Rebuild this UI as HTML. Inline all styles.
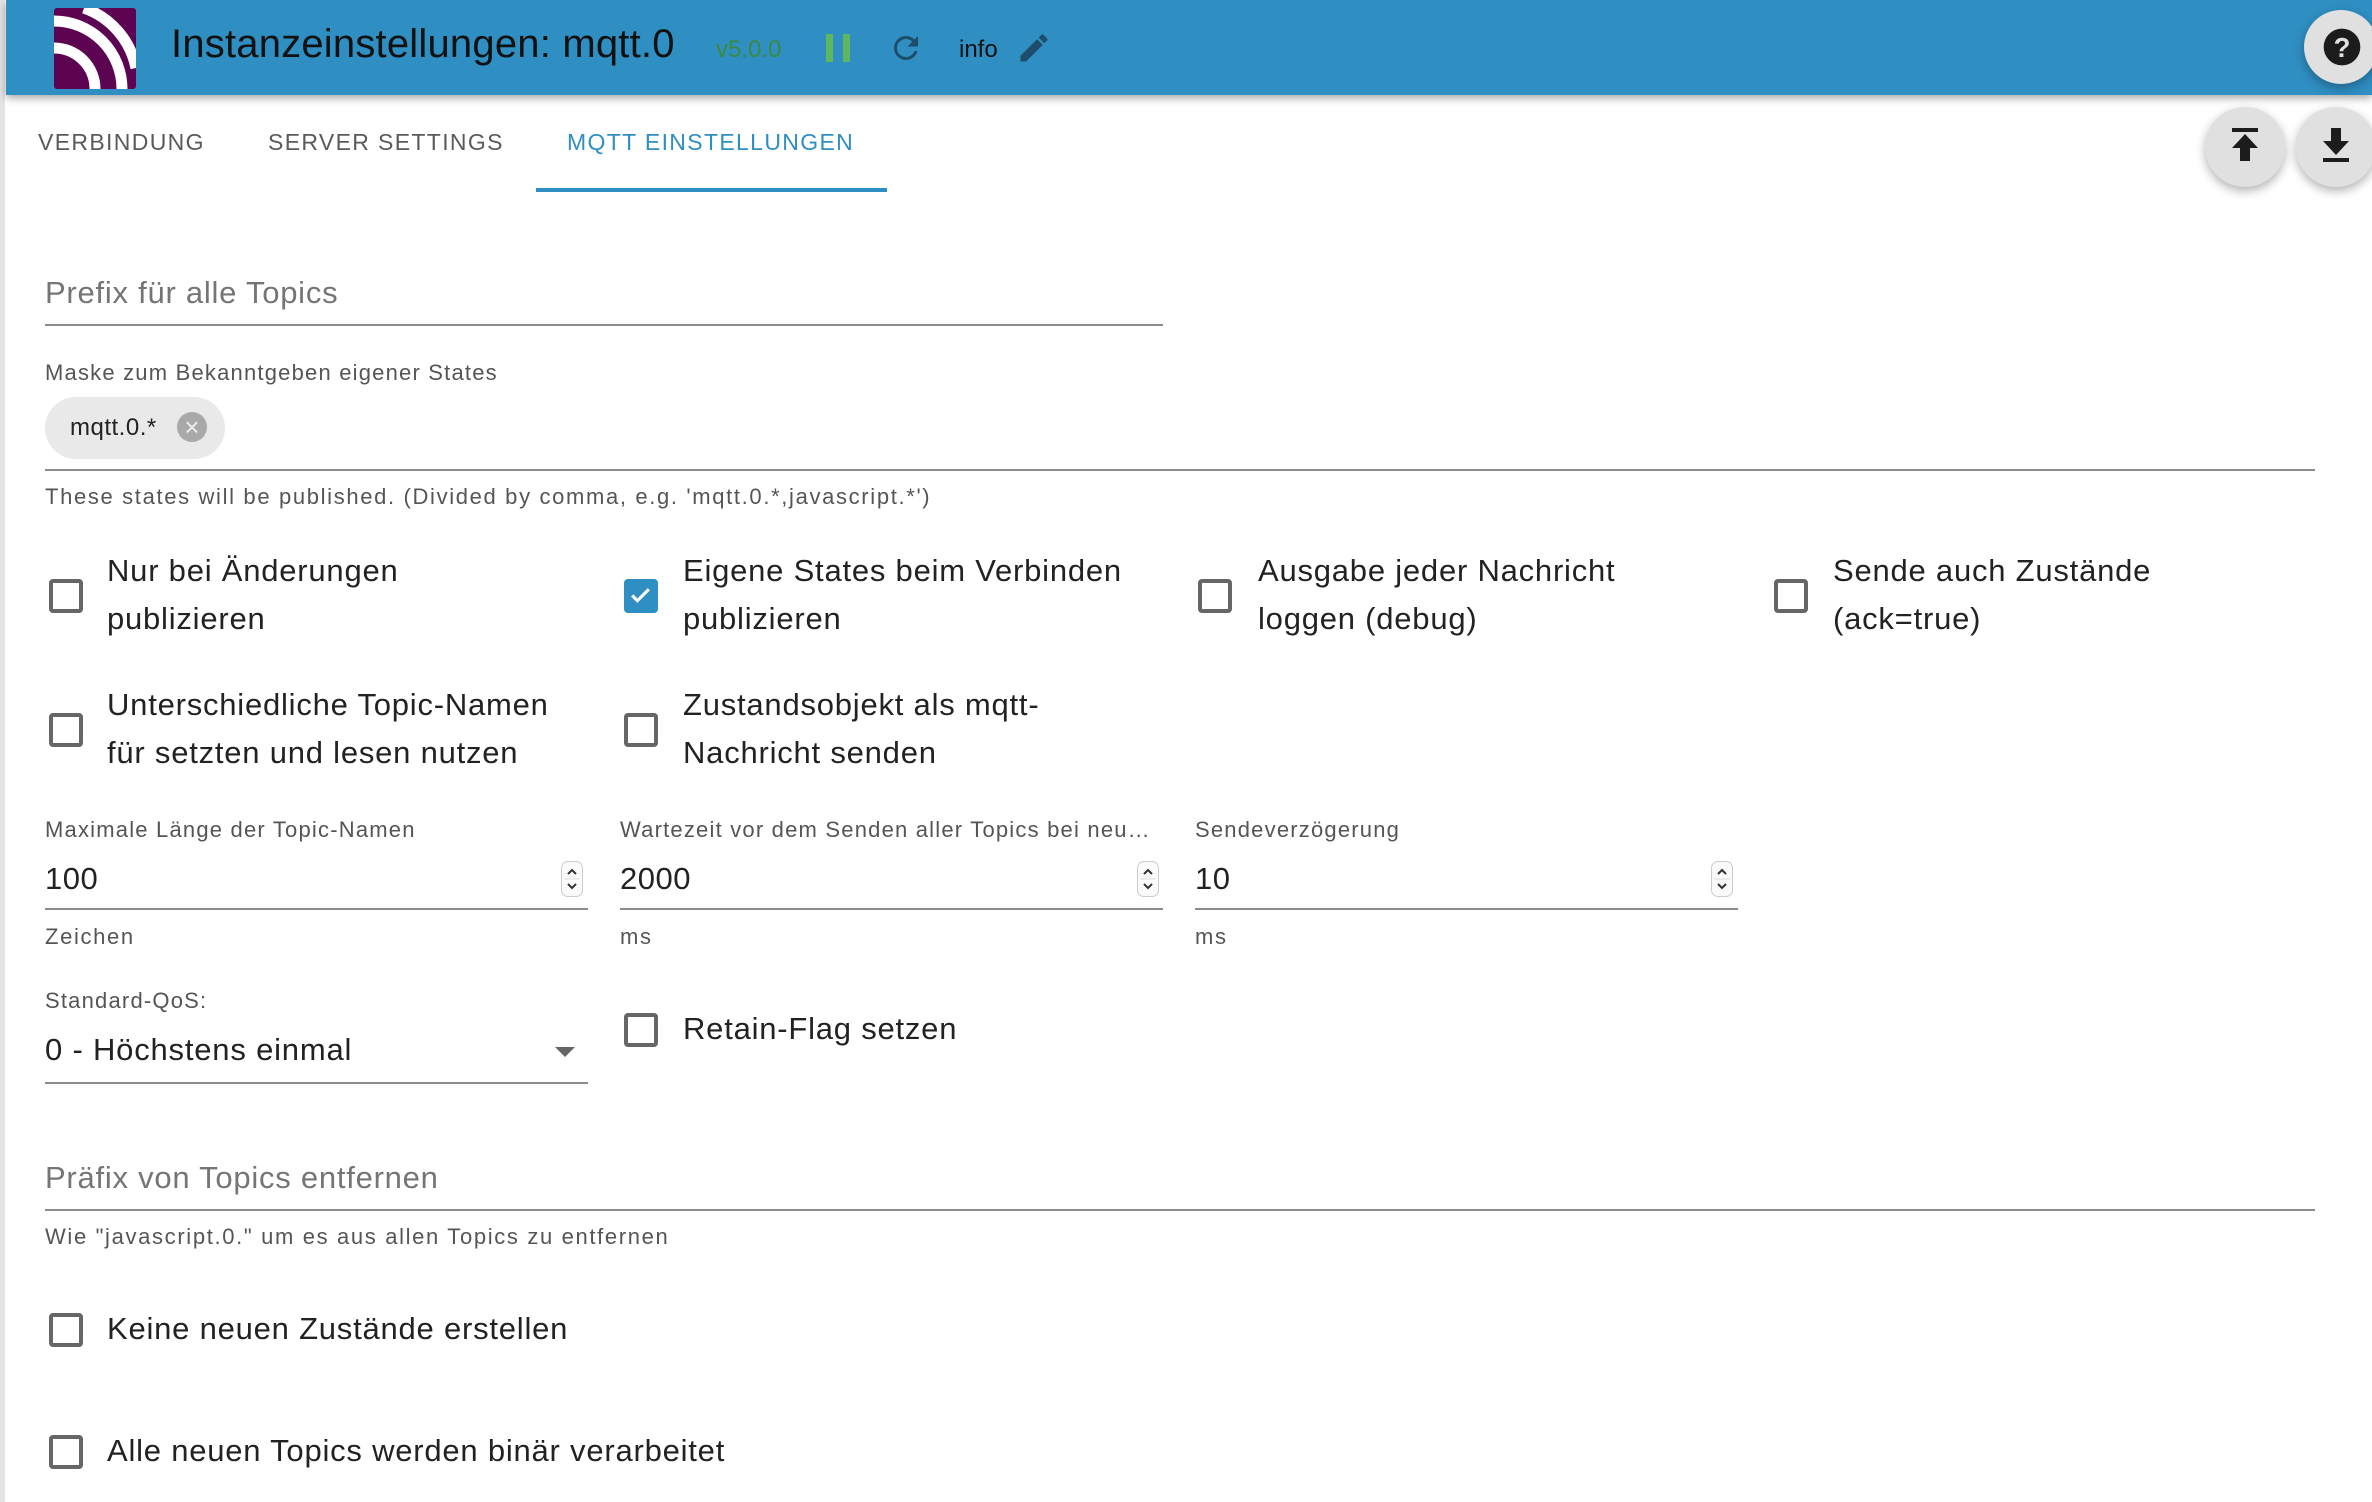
<!DOCTYPE html>
<html><head><meta charset="utf-8"><style>
*{margin:0;padding:0;box-sizing:border-box}
body{width:2372px;height:1502px;background:#fff;position:relative;overflow:hidden;font-family:"Liberation Sans",Arial,sans-serif;color:#1d1d1d}
.a{position:absolute;white-space:nowrap}
.lbl{font-size:22px;color:#555;letter-spacing:1.2px}
.hlp{font-size:22px;color:#555;letter-spacing:1.65px}
.big{font-size:31px;color:#222;letter-spacing:0.5px}
.line{position:absolute;height:2px;background:#8c8c8c}
.cb{position:absolute;width:34px;height:34px;border:4px solid #666;border-radius:4px}
.cbt{position:absolute;font-size:31px;line-height:48px;color:#222;white-space:nowrap;letter-spacing:0.78px}
.tab{font-size:23px;letter-spacing:1.35px}
.spin{position:absolute;width:22px;height:36px;border:1px solid #ccc;border-radius:7px;background:#fafafa}
.fab{position:absolute;width:80px;height:80px;border-radius:50%;background:#e0e0e0;box-shadow:0 4px 10px rgba(0,0,0,.3)}
</style></head><body>
<div class="a" style="left:0;top:0;width:5px;height:1502px;background:#e4e4e4"></div>
<div class="a" style="left:6px;top:0;width:2366px;height:95px;background:#2f8ec2;box-shadow:0 3px 8px rgba(0,0,0,.35)"></div>
<svg class="a" style="left:54px;top:8px" width="82" height="81" viewBox="0 0 82 81">
<rect width="82" height="81" rx="3" fill="#5c0452"/>
<g fill="none" stroke="#fff" stroke-width="11">
<path d="M0 40 A41 41 0 0 1 41 81"/>
<path d="M0 13 A68 68 0 0 1 68 81"/>
<path d="M30 0 A80 80 0 0 1 82 60"/>
</g></svg>
<div class="a" style="left:171px;top:22px;font-size:40px;color:#111;letter-spacing:0.2px">Instanzeinstellungen: mqtt.0</div>
<div class="a" style="left:716px;top:36px;font-size:24px;color:#3b8a3f">v5.0.0</div>
<div class="a" style="left:826px;top:34px;width:7px;height:28px;background:#5fb65f"></div>
<div class="a" style="left:843px;top:34px;width:7px;height:28px;background:#5fb65f"></div>
<svg class="a" style="left:888px;top:30px" width="36" height="36" viewBox="0 0 24 24"><path fill="#1d4d6a" d="M17.65 6.35A7.96 7.96 0 0 0 12 4a8 8 0 1 0 7.73 10h-2.08A6 6 0 1 1 12 6c1.66 0 3.14.69 4.22 1.78L13 11h7V4l-2.35 2.35z"/></svg>
<div class="a" style="left:959px;top:36px;font-size:24px;color:#111">info</div>
<svg class="a" style="left:1016px;top:30px" width="36" height="36" viewBox="0 0 24 24"><path fill="#1d4d6a" d="M3 17.25V21h3.75L17.81 9.94l-3.75-3.75L3 17.25zM20.71 7.04a1 1 0 0 0 0-1.41l-2.34-2.34a1 1 0 0 0-1.41 0l-1.83 1.83 3.75 3.75 1.83-1.83z"/></svg>
<div class="fab" style="left:2304px;top:10px;width:74px;height:74px"></div>
<svg class="a" style="left:2320px;top:25px" width="44" height="44" viewBox="0 0 24 24"><circle cx="12" cy="12" r="10" fill="#1c1c1c"/><text x="12" y="17.5" font-size="15" font-weight="bold" fill="#e0e0e0" text-anchor="middle" font-family="Liberation Sans">?</text></svg>
<div class="a tab" style="left:38px;top:129px;color:#5a5a5a">VERBINDUNG</div>
<div class="a tab" style="left:268px;top:129px;color:#5a5a5a">SERVER SETTINGS</div>
<div class="a tab" style="left:567px;top:129px;color:#2f8ec2">MQTT EINSTELLUNGEN</div>
<div class="a" style="left:536px;top:188px;width:351px;height:4px;background:#2f8ec2"></div>
<div class="fab" style="left:2205px;top:107px"></div>
<div class="fab" style="left:2296px;top:107px"></div>
<svg class="a" style="left:2230px;top:128px" width="30" height="36" viewBox="0 0 30 36"><rect x="2" y="0" width="26" height="4" fill="#1c1c1c"/><path d="M15 6 L28 20 H20 V33 H10 V20 H2Z" fill="#1c1c1c"/></svg>
<svg class="a" style="left:2321px;top:128px" width="30" height="36" viewBox="0 0 30 36"><rect x="2" y="30" width="26" height="4" fill="#1c1c1c"/><path d="M15 27 L28 13 H20 V0 H10 V13 H2Z" fill="#1c1c1c"/></svg>

<div class="a" style="left:45px;top:275px;font-size:31px;color:#757575;letter-spacing:0.75px">Prefix für alle Topics</div>
<div class="line" style="left:45px;top:324px;width:1118px"></div>
<div class="a lbl" style="left:45px;top:360px">Maske zum Bekanntgeben eigener States</div>
<div class="a" style="left:45px;top:397px;width:180px;height:62px;border-radius:31px;background:#e9e9e9"></div>
<div class="a" style="left:70px;top:414px;font-size:24px;color:#222;letter-spacing:0.5px">mqtt.0.*</div>
<div class="a" style="left:177px;top:412px;width:30px;height:30px;border-radius:50%;background:#a9a9a9;color:#eee;font-size:26px;line-height:30px;text-align:center">×</div>
<div class="line" style="left:45px;top:469px;width:2270px"></div>
<div class="a hlp" style="left:45px;top:484px">These states will be published. (Divided by comma, e.g. 'mqtt.0.*,javascript.*')</div>

<div class="cb" style="left:49px;top:579px"></div>
<div class="cbt" style="left:107px;top:547px">Nur bei Änderungen<br>publizieren</div>
<div class="cb" style="left:624px;top:579px;background:#2f8ec2;border-color:#2f8ec2"></div>
<svg class="a" style="left:627px;top:583px" width="27" height="25" viewBox="0 0 24 24"><path d="M4 12l5 5L20 6" stroke="#fff" stroke-width="3" fill="none"/></svg>
<div class="cbt" style="left:683px;top:547px">Eigene States beim Verbinden<br>publizieren</div>
<div class="cb" style="left:1198px;top:579px"></div>
<div class="cbt" style="left:1258px;top:547px">Ausgabe jeder Nachricht<br>loggen (debug)</div>
<div class="cb" style="left:1774px;top:579px"></div>
<div class="cbt" style="left:1833px;top:547px">Sende auch Zustände<br>(ack=true)</div>

<div class="cb" style="left:49px;top:713px"></div>
<div class="cbt" style="left:107px;top:681px">Unterschiedliche Topic-Namen<br>für setzten und lesen nutzen</div>
<div class="cb" style="left:624px;top:713px"></div>
<div class="cbt" style="left:683px;top:681px">Zustandsobjekt als mqtt-<br>Nachricht senden</div>

<div class="a lbl" style="left:45px;top:817px">Maximale Länge der Topic-Namen</div>
<div class="a big" style="left:45px;top:861px">100</div>
<div class="spin" style="left:561px;top:861px"><svg width="20" height="34" viewBox="0 0 20 34"><path d="M6 12l4-4 4 4M6 22l4 4 4-4" stroke="#333" stroke-width="2" fill="none"/><path d="M2 17h16" stroke="#ddd"/></svg></div>
<div class="line" style="left:45px;top:908px;width:543px"></div>
<div class="a hlp" style="left:45px;top:924px">Zeichen</div>

<div class="a lbl" style="left:620px;top:817px">Wartezeit vor dem Senden aller Topics bei neu…</div>
<div class="a big" style="left:620px;top:861px">2000</div>
<div class="spin" style="left:1137px;top:861px"><svg width="20" height="34" viewBox="0 0 20 34"><path d="M6 12l4-4 4 4M6 22l4 4 4-4" stroke="#333" stroke-width="2" fill="none"/><path d="M2 17h16" stroke="#ddd"/></svg></div>
<div class="line" style="left:620px;top:908px;width:543px"></div>
<div class="a hlp" style="left:620px;top:924px">ms</div>

<div class="a lbl" style="left:1195px;top:817px">Sendeverzögerung</div>
<div class="a big" style="left:1195px;top:861px">10</div>
<div class="spin" style="left:1711px;top:861px"><svg width="20" height="34" viewBox="0 0 20 34"><path d="M6 12l4-4 4 4M6 22l4 4 4-4" stroke="#333" stroke-width="2" fill="none"/><path d="M2 17h16" stroke="#ddd"/></svg></div>
<div class="line" style="left:1195px;top:908px;width:543px"></div>
<div class="a hlp" style="left:1195px;top:924px">ms</div>

<div class="a lbl" style="left:45px;top:988px">Standard-QoS:</div>
<div class="a big" style="left:45px;top:1032px;letter-spacing:0.8px">0 - Höchstens einmal</div>
<div class="a" style="left:555px;top:1047px;width:0;height:0;border-left:10px solid transparent;border-right:10px solid transparent;border-top:10px solid #666"></div>
<div class="line" style="left:45px;top:1082px;width:543px"></div>
<div class="cb" style="left:624px;top:1013px"></div>
<div class="cbt" style="left:683px;top:1005px">Retain-Flag setzen</div>

<div class="a" style="left:45px;top:1160px;font-size:31px;color:#757575;letter-spacing:0.75px">Präfix von Topics entfernen</div>
<div class="line" style="left:45px;top:1209px;width:2270px"></div>
<div class="a hlp" style="left:45px;top:1224px">Wie "javascript.0." um es aus allen Topics zu entfernen</div>

<div class="cb" style="left:49px;top:1313px"></div>
<div class="cbt" style="left:107px;top:1305px">Keine neuen Zustände erstellen</div>
<div class="cb" style="left:49px;top:1435px"></div>
<div class="cbt" style="left:107px;top:1427px">Alle neuen Topics werden binär verarbeitet</div>
</body></html>
